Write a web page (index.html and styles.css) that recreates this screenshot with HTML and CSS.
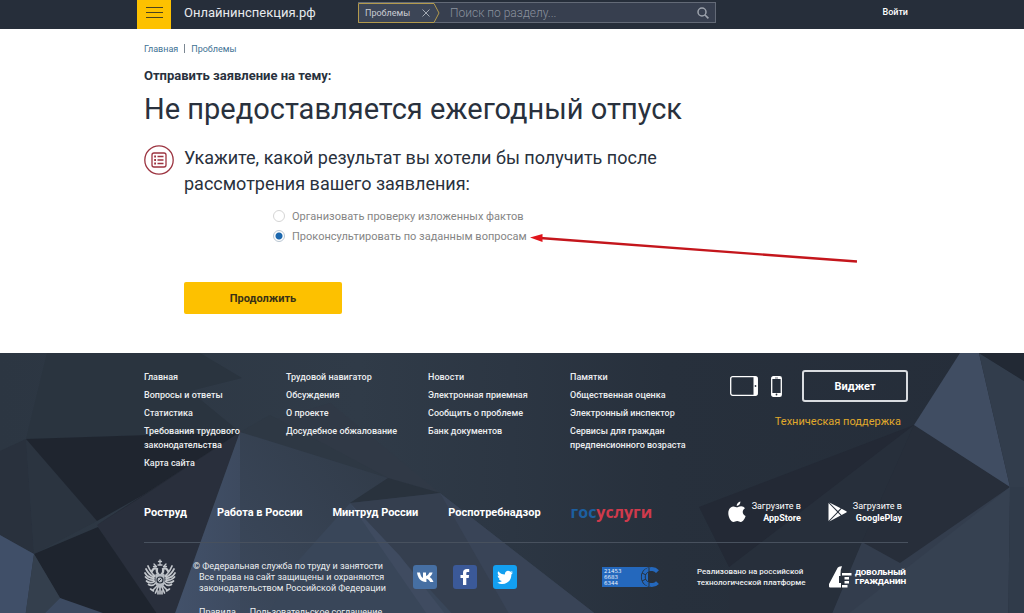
FILE: index.html
```html
<!DOCTYPE html>
<html lang="ru">

<head>
    <meta charset="UTF-8">
    <meta name="viewport" content="width=device-width, initial-scale=1.0">
    <title>Онлайнинспекция.рф</title>
    <link rel="stylesheet" href="styles.css">
</head>

<body>
    <header class="header">
        <div class="container header-row">
            <button type="button" class="menu-btn" aria-label="Меню">
                <span></span>
                <span></span>
                <span></span>
            </button>
            <a href="#" class="site-name">Онлайнинспекция.рф</a>

            <form class="search" onsubmit="return false">
                <div class="tag">
                    <svg class="tag-shape" viewBox="0 0 82 20" aria-hidden="true">
                        <path d="M.5 .5H76L81 10L76 19.5H.5Z" fill="#3c4556" stroke="#b39a4c" />
                    </svg>
                    <span class="tag-text">Проблемы</span>
                    <button type="button" class="tag-close" aria-label="Убрать">
                        <svg viewBox="0 0 8 8" width="8" height="8"><path d="M.5 .5L7.5 7.5M7.5 .5L.5 7.5" stroke="#a3a9b3" fill="none" /></svg>
                    </button>
                </div>
                <input type="text" class="search-input" placeholder="Поиск по разделу..." aria-label="Поиск по разделу">
                <button type="submit" class="search-btn" aria-label="Найти">
                    <svg viewBox="0 0 12 12" width="12" height="12"><circle cx="5" cy="5" r="4" fill="none" stroke="#9da3ad" stroke-width="1.5" /><path d="M8 8L11.4 11.4" stroke="#9da3ad" stroke-width="1.7" /></svg>
                </button>
            </form>

            <a href="#" class="login">Войти</a>
        </div>
    </header>

    <main class="container main">
        <nav class="breadcrumbs">
            <a href="#">Главная</a>
            <a href="#">Проблемы</a>
        </nav>

        <p class="subtitle">Отправить заявление на тему:</p>
        <h1 class="title">Не предоставляется ежегодный отпуск</h1>

        <form class="question" onsubmit="return false">
            <svg class="question-icon" viewBox="0 0 30 30" aria-hidden="true">
                <g fill="none" stroke="#9c3440">
                    <circle cx="15" cy="15" r="14.2" stroke-width="1.3" />
                    <rect x="8" y="8" width="14" height="14" rx="2" stroke-width="1.3" />
                    <path d="M13.5 11.5H19.5M13.5 15H19.5M13.5 18.5H19.5" stroke-width="1.4" />
                    <path d="M10.2 11.5H12M10.2 15H12M10.2 18.5H12" stroke-width="2" />
                </g>
            </svg>
            <div class="question-body">
                <h2 class="question-title">Укажите, какой результат вы хотели бы получить после рассмотрения вашего заявления:</h2>

                <div class="options">
                    <div class="option">
                        <input type="radio" name="result" id="check">
                        <label for="check">Организовать проверку изложенных фактов</label>
                    </div>
                    <div class="option">
                        <input type="radio" name="result" id="consult" checked>
                        <label for="consult">Проконсультировать по заданным вопросам</label>
                        <svg class="arrow" viewBox="0 0 330 32" aria-hidden="true">
                            <path d="M11 5L328 28.5" stroke="#c4161c" stroke-width="2.4" />
                            <path d="M1 4.5L13.5 1V9Z" fill="#e0151c" />
                        </svg>
                    </div>
                </div>

                <button type="submit" class="next-btn">Продолжить</button>
            </div>
        </form>
    </main>

    <footer class="footer">
        <svg class="footer-bg" viewBox="0 0 1024 280" preserveAspectRatio="xMidYMin slice" aria-hidden="true">
            <defs>
                <linearGradient id="base" x1="0" x2="1">
                    <stop offset="0" stop-color="#2c3642" />
                    <stop offset=".35" stop-color="#303b48" />
                    <stop offset=".5" stop-color="#2c3643" />
                    <stop offset=".65" stop-color="#27303c" />
                    <stop offset="1" stop-color="#252d39" />
                </linearGradient>
                <linearGradient id="stripe" x1="0" x2="1">
                    <stop offset="0" stop-color="#43526b" />
                    <stop offset="1" stop-color="#3d4a5f" />
                </linearGradient>
                <linearGradient id="slope" x1="0" x2="1" y1="1" y2="0">
                    <stop offset="0" stop-color="#3c495d" />
                    <stop offset="1" stop-color="#303a47" />
                </linearGradient>
            </defs>
            <rect width="1024" height="280" fill="url(#base)" />
            <path d="M47 0H200L242 25L190 38L240 79L26 86Z" fill="#2a343f" />
            <path d="M240 79L330 95L388 125L350 150L297 215L258 280H240Z" fill="url(#slope)" />
            <path d="M270 68L330 50L440 140L388 125Z" fill="#303946" />
            <path d="M240 79L270 62L388 125Z" fill="#2e3844" />
            <path d="M350 150L388 125L440 140Z" fill="#29323d" />
            <path d="M350 150L440 140L620 280H460Z" fill="#353f4f" />
            <path d="M440 140L620 280H520Z" fill="#394457" />
            <path d="M350 150L297 209L258 280H470Z" fill="#394659" />
            <path d="M350 150L400 203L460 280H440Z" fill="#3f4b60" />
            <path d="M0 98L26 86L34 201L0 182Z" fill="#29313d" />
            <path d="M26 86L97 168L34 201Z" fill="#2b3440" />
            <path d="M26 86L240 79L200 110L97 168Z" fill="#1f252f" />
            <path d="M97 172L240 79L168 280Z" fill="#292f3c" />
            <path d="M97 172L240 79L140 145Z" fill="#232933" />
            <path d="M34 201L98 174L170 280H130L60 245Z" fill="#1e242e" />
            <path d="M240 79V280H168Z" fill="url(#stripe)" />
            <path d="M0 182L34 201L23 280H0Z" fill="#404f68" />
            <path d="M34 201L60 245L40 265L23 280Z" fill="#343f4d" />
            <path d="M60 245L40 265V280H160Z" fill="#3c4a61" />
            <path d="M699 154L914 72L840 210L729 214Z" fill="#232935" />
            <path d="M914 72L862 189L824 280H729V214Z" fill="#272f3b" />
            <path d="M914 72L1010 134L900 220L862 189Z" fill="#272e3a" />
            <path d="M1010 134L900 210L862 189L824 280H1008Z" fill="#333d4d" />
            <path d="M1010 134L824 280H1008Z" fill="#364151" />
            <path d="M1010 134H1024V280H1008Z" fill="#303b4a" />
            <path d="M960 0H979L1010 134L914 72Z" fill="#404d62" />
            <path d="M979 0L1024 28V134H1010Z" fill="#323d4c" />
            <path d="M979 0H1024V28Z" fill="#222934" />
        </svg>

        <div class="container footer-content">
            <div class="footer-top">
                <ul class="links">
                    <li><a href="#">Главная</a></li>
                    <li><a href="#">Вопросы и ответы</a></li>
                    <li><a href="#">Статистика</a></li>
                    <li><a href="#">Требования трудового законодательства</a></li>
                    <li><a href="#">Карта сайта</a></li>
                </ul>
                <ul class="links">
                    <li><a href="#">Трудовой навигатор</a></li>
                    <li><a href="#">Обсуждения</a></li>
                    <li><a href="#">О проекте</a></li>
                    <li><a href="#">Досудебное обжалование</a></li>
                </ul>
                <ul class="links">
                    <li><a href="#">Новости</a></li>
                    <li><a href="#">Электронная приемная</a></li>
                    <li><a href="#">Сообщить о проблеме</a></li>
                    <li><a href="#">Банк документов</a></li>
                </ul>
                <ul class="links">
                    <li><a href="#">Памятки</a></li>
                    <li><a href="#">Общественная оценка</a></li>
                    <li><a href="#">Электронный инспектор</a></li>
                    <li><a href="#">Сервисы для граждан предпенсионного возраста</a></li>
                </ul>
                <div class="widget">
                    <div class="widget-row">
                        <svg class="tablet" viewBox="0 0 28 20" aria-hidden="true">
                            <rect x=".7" y=".7" width="26.6" height="18.6" rx="2" fill="none" stroke="#fff" stroke-width="1.3" />
                            <path d="M23.5 .7H26Q27.3 .7 27.3 2V18Q27.3 19.3 26 19.3H23.5Z" fill="#fff" />
                            <circle cx="25.5" cy="10" r=".9" fill="#29323e" />
                        </svg>
                        <svg class="phone" viewBox="0 0 11 21" aria-hidden="true">
                            <rect x=".7" y=".7" width="9.6" height="19.6" rx="1.6" fill="none" stroke="#fff" stroke-width="1.3" />
                            <path d="M1 1H10V3H1ZM1 17H10V20H1Z" fill="#fff" />
                            <path d="M4 2H7" stroke="#29323e" stroke-width=".7" />
                            <circle cx="5.5" cy="18.5" r=".9" fill="#29323e" />
                        </svg>
                        <button type="button" class="widget-btn">Виджет</button>
                    </div>
                    <a href="#" class="support">Техническая поддержка</a>
                </div>
            </div>

            <div class="partners">
                <a href="#">Роструд</a>
                <a href="#">Работа в России</a>
                <a href="#">Минтруд России</a>
                <a href="#">Роспотребнадзор</a>
                <a href="#" class="gosuslugi"><span>гос</span>услуги</a>
                <div class="stores">
                    <a href="#" class="store">
                        <svg viewBox="0 0 18 22" width="18" height="22" aria-hidden="true">
                            <path d="M12.4 .4C12.6 2.7 10.9 4.9 8.7 5C8.5 2.8 10.4 .7 12.4 .4ZM9 6.3C9.9 6.3 11.2 5.2 13.1 5.2C14.8 5.3 16.2 6 17 7.3C13.6 9.4 14.2 13.7 17.6 15C16.9 17.4 15 20.9 12.9 21C11.4 21.1 10.9 20.1 9.2 20.1C7.5 20.1 6.9 21 5.5 21C3 21 .3 16.3 .3 12.2C.3 7.9 2.8 5.5 5.4 5.4C7 5.4 8.1 6.3 9 6.3Z" fill="#fff" />
                        </svg>
                        <span>Загрузите в<b>AppStore</b></span>
                    </a>
                    <a href="#" class="store">
                        <svg viewBox="0 0 19 20" width="19" height="20" aria-hidden="true">
                            <path d="M.5 1L9.2 9.9L.5 18.9ZM1.3 .4L12.7 6.3L9.9 9.1ZM13.6 6.8L18.3 9.2Q19.2 9.9 18.3 10.6L13.6 13.1L10.6 9.9ZM1.3 19.5L9.9 10.7L12.7 13.5Z" fill="#fff" />
                        </svg>
                        <span>Загрузите в<b>GooglePlay</b></span>
                    </a>
                </div>
            </div>

            <div class="footer-bottom">
                <div class="owner">
                    <svg class="eagle" viewBox="0 0 32 36" aria-hidden="true">
                        <g fill="none" stroke="#c3c7cc" stroke-linecap="round">
                            <path d="M16 1V5M14.5 2.5H17.5M14 6H18" stroke-width="1.3" />
                            <path d="M10 5L12 7M22 5L20 7M9.5 7.5H12.5M19.5 7.5H22.5" stroke-width="1.3" />
                            <path d="M8 12Q10 8 13 10Q12 13 15 16M24 12Q22 8 19 10Q20 13 17 16" stroke-width="2.2" />
                            <path d="M11 17Q7 14 4 7M10 18Q5 16 2 10M10 19.5Q4 19 1 14M10 21Q5 22 1.5 18M10.5 22.5Q6 25 2.5 22M12 24Q8 28 4.5 25.5" stroke-width="1.7" />
                            <path d="M21 17Q25 14 28 7M22 18Q27 16 30 10M22 19.5Q28 19 31 14M22 21Q27 22 30.5 18M21.5 22.5Q26 25 29.5 22M20 24Q24 28 27.5 25.5" stroke-width="1.7" />
                            <path d="M13 27L9 31M19 27L23 31M6.5 30L9.5 32M25.5 30L22.5 32M14 28L11.5 34M18 28L20.5 34M16 28V35M14 32V35M18 32V35" stroke-width="1.6" />
                        </g>
                        <path d="M11.5 15H20.5V24Q20 28 16 29Q12 28 11.5 24Z" fill="#b6bbc2" />
                        <circle cx="16" cy="21" r="3" fill="none" stroke="#28303c" stroke-width="1.2" />
                        <path d="M14.5 22.5L17.5 19.5" stroke="#28303c" />
                    </svg>
                    <p class="copyright">© Федеральная служба по труду и занятости<br>Все права на сайт защищены и охраняются<br>законодательством Российской Федерации</p>
                </div>

                <div class="socials">
                    <a href="#" aria-label="ВКонтакте">
                        <svg viewBox="0 0 24 24"><rect width="24" height="24" rx="3" fill="#466fa3" /><path d="M12.9 17C8 17 5 13.6 4 7.5H7C7.5 10.5 8.6 12.4 10 13V7.5H13V11C14.5 10.5 15.8 9 16.5 7.5H19.6C19 9.5 17.8 11 16.6 12C18 12.7 19.5 14.5 20.5 17H17.2C16.3 15.2 14.8 14 13.4 13.8V17Z" fill="#fff" /></svg>
                    </a>
                    <a href="#" aria-label="Facebook">
                        <svg viewBox="0 0 24 24"><rect width="24" height="24" rx="3" fill="#3b5998" /><path d="M10 20V13H7.5V9.9H10V7.8C10 5.2 11.5 4 13.8 4H16.2V7H14.7C13.6 7 13.3 7.4 13.3 8.3V9.9H16.1L15.7 13H13.3V20Z" fill="#fff" /></svg>
                    </a>
                    <a href="#" aria-label="Twitter">
                        <svg viewBox="0 0 24 24"><rect width="24" height="24" rx="3" fill="#139ff0" /><path d="M20 7.2C19.4 7.5 18.7 7.7 18 7.8C18.8 7.3 19.3 6.7 19.6 5.9C18.9 6.3 18.1 6.6 17.4 6.7C15.3 4.5 11.5 6 11.9 9.6C9.2 9.5 6.8 8.2 5.2 6.2C4.2 8 4.9 9.8 6.2 10.8C5.7 10.8 5.1 10.6 4.7 10.4C4.7 12.1 5.9 13.4 7.4 13.7C6.9 13.8 6.4 13.9 5.9 13.8C6.3 15.1 7.5 16 9 16.1C7.6 17.2 5.9 17.7 4.2 17.5C11 21.6 18.5 17.2 18.4 9.4C19 8.8 19.6 8.1 20 7.2Z" fill="#fff" /></svg>
                    </a>
                </div>

                <svg class="counter" viewBox="0 0 60 22" role="img" aria-label="Счетчик посещений">
                    <rect x="1" y="1" width="46" height="20" fill="#2468bd" />
                    <g fill="#e6eefb" font-family="DejaVu Sans, sans-serif" font-size="5.5">
                        <text x="3" y="7">21453</text>
                        <text x="3" y="13">6683</text>
                        <text x="3" y="19">6344</text>
                    </g>
                    <path d="M47 2A9.5 9.5 0 0 0 47 20M57 5A8.500 8.500 0 0 0 50 1.500" fill="none" stroke="#27303c" stroke-width="1.2" />
                    <path d="M56.5 5.5A8 8 0 1 0 56.5 16.5" fill="none" stroke="#2468bd" stroke-width="4" />
                    <path d="M52 6A5.500 5.500 0 1 0 52 16" fill="none" stroke="#27303c" />
                    <path d="M41 7L45 9M41 15L45 13M48 2V5.500M48 17V20" stroke="#27303c" />
                </svg>

                <p class="platform">Реализовано на российской<br>технологической платформе</p>

                <a href="#" class="citizen">
                    <svg viewBox="0 0 23 22" width="23" height="22" aria-hidden="true">
                        <path d="M0 18L8 3Q9 0 13 .2Q11.5 3 11.5 8V10H10V17H12V21.5H1Q-.5 21 0 18Z" fill="#fff" />
                        <path d="M13 7H22.5V9.5H13ZM15.5 11H20V13.5H15.5ZM15.5 15H20V17.5H15.5ZM13 19H18.5V21.5H13Z" fill="#fff" />
                    </svg>
                    <span>ДОВОЛЬНЫЙ<br>ГРАЖДАНИН</span>
                </a>
            </div>

            <div class="legal">
                <a href="#">Правила</a>
                <a href="#">Пользовательское соглашение</a>
            </div>
        </div>
    </footer>
</body>

</html>
```

FILE: styles.css
```css
* {
    box-sizing: border-box;
}

body {
    margin: 0;
    font-family: Roboto, "Liberation Sans", sans-serif;
    font-size: 11px;
    color: #29313d;
    background-color: #fff;
}

a {
    color: inherit;
    text-decoration: none;
}

p,
h1,
h2,
ul {
    margin: 0;
    padding: 0;
}

button,
input {
    margin: 0;
    padding: 0;
    border: 0;
    font-family: inherit;
}

button {
    cursor: pointer;
}

svg {
    display: block;
}

.container {
    max-width: 792px;
    margin: 0 auto;
    padding-left: 28px;
}

/* header */
.header {
    background-color: #262e3a;
}

.header-row {
    display: flex;
    align-items: flex-start;
    height: 29px;
    padding-left: 21px;
}

.menu-btn {
    display: flex;
    flex-direction: column;
    justify-content: center;
    align-items: center;
    gap: 4px;
    width: 34px;
    height: 29px;
    padding-bottom: 4px;
    background-color: #fdc100;
}

.menu-btn span {
    width: 17px;
    height: 1px;
    background-color: #4b431f;
}

.site-name {
    width: 187px;
    padding-left: 13px;
    color: #e8eaed;
    font-size: 13px;
    line-height: 26px;
}

.search {
    display: flex;
    flex: 0 1 358px;
    height: 21px;
    margin-top: 2px;
    background-color: #373f4f;
    border: 1px solid #636a77;
    border-left: 0;
}

.tag {
    position: relative;
    display: flex;
    align-items: center;
    justify-content: space-between;
    width: 82px;
    height: 20px;
    padding: 0 10px 0 7px;
}

.tag-shape {
    position: absolute;
    left: 0;
    top: 0;
    width: 82px;
    height: 20px;
}

.tag-text,
.tag-close {
    position: relative;
}

.tag-text {
    color: #c9ccd2;
    font-size: 9px;
}

.tag-close,
.search-btn {
    background: none;
}

.search-input {
    flex: 1;
    min-width: 0;
    padding-left: 10px;
    background: none;
    color: #fff;
    font-size: 12px;
    font-weight: 300;
    outline: none;
}

.search-input::placeholder {
    color: #8b929e;
}

.search-btn {
    padding: 0 6px;
}

.login {
    margin-left: auto;
    color: #fff;
    font-size: 9px;
    font-weight: 500;
    line-height: 24px;
}

/* question */
.main {
    padding-top: 14px;
    padding-bottom: 39px;
}

.breadcrumbs {
    display: flex;
    color: #3f7394;
    font-size: 9px;
    line-height: 12px;
}

.breadcrumbs a + a {
    position: relative;
    padding-left: 13px;
}

.breadcrumbs a + a::before {
    content: "";
    position: absolute;
    left: 6px;
    top: 1px;
    width: 1px;
    height: 9px;
    background-color: #7b8792;
}

.subtitle {
    margin-top: 12px;
    font-size: 13px;
    font-weight: 700;
    line-height: 18px;
}

.title {
    margin-top: 4px;
    font-size: 29px;
    font-weight: 400;
    line-height: 40px;
}

.question {
    display: flex;
    gap: 10px;
    margin-top: 16px;
}

.question-icon {
    flex: none;
    width: 30px;
    height: 30px;
}

.question-title {
    max-width: 510px;
    font-size: 18px;
    font-weight: 400;
    line-height: 26px;
}

.options {
    margin-top: 9px;
    padding-left: 89px;
}

.option {
    position: relative;
    display: flex;
    align-items: center;
    gap: 7px;
    height: 20px;
    color: #858585;
}

.option input {
    appearance: none;
    width: 12px;
    height: 12px;
    border: 1px solid #d5d5d5;
    border-radius: 50%;
    background-color: #fff;
}

.option input:checked {
    border-color: #b9c6d2;
    background-image: radial-gradient(circle, #1c68ae 3px, transparent 4px);
}

/* pointer drawn next to the selected option */
.arrow {
    position: absolute;
    left: 256px;
    top: 7px;
    width: 330px;
    height: 32px;
}

.next-btn {
    width: 158px;
    height: 32px;
    margin-top: 36px;
    border-radius: 2px;
    background-color: #fdc100;
    color: #3a3115;
    font-size: 11px;
    font-weight: 700;
}

/* footer */
.footer {
    position: relative;
    overflow: hidden;
    background-color: #29323e;
    color: #eceef0;
}

.footer-bg {
    position: absolute;
    left: 0;
    top: 0;
    width: 100%;
    height: 100%;
}

.footer-content {
    position: relative;
}

.footer-top {
    display: flex;
    height: 150px;
    padding-top: 17px;
}

.links {
    width: 142px;
    padding-right: 20px;
    list-style: none;
    font-size: 9px;
    font-weight: 500;
    line-height: 14px;
}

.links li {
    margin-bottom: 4px;
}

.widget {
    display: flex;
    flex: 1;
    flex-direction: column;
    align-items: flex-end;
}

.widget-row {
    display: flex;
    align-items: center;
}

.tablet {
    width: 28px;
    height: 20px;
    margin-right: 13px;
}

.phone {
    width: 11px;
    height: 21px;
    margin-right: 20px;
}

.widget-btn {
    width: 106px;
    height: 32px;
    border: 2px solid #d9dce0;
    border-radius: 3px;
    background: none;
    color: #fff;
    font-size: 11px;
    font-weight: 700;
}

.support {
    margin-top: 13px;
    padding-right: 7px;
    color: #e0a92b;
    font-size: 11px;
    line-height: 14px;
}

.partners {
    display: flex;
    align-items: center;
    gap: 30px;
    height: 40px;
    padding-bottom: 21px;
    border-bottom: 1px solid #48515e;
    color: #fff;
    font-size: 11px;
    font-weight: 700;
}

.gosuslugi {
    color: #cf3a4c;
    font-family: "Open Sans", sans-serif;
    font-size: 16px;
}

.gosuslugi span {
    color: #1c5fa0;
}

.stores {
    display: flex;
    gap: 27px;
    margin-left: auto;
    padding-right: 6px;
}

.store {
    display: flex;
    align-items: center;
    gap: 6px;
    font-size: 9px;
    font-weight: 400;
    line-height: 12px;
    text-align: right;
}

.store b {
    display: block;
}

.footer-bottom {
    display: grid;
    grid-template-columns: 269px 188px 96px 132px auto;
    align-items: center;
    height: 63px;
    padding-top: 5px;
}

.owner {
    display: flex;
    align-items: center;
    gap: 23px;
}

.eagle {
    width: 32px;
    height: 36px;
}

.copyright {
    font-size: 9px;
    line-height: 11px;
    text-indent: -6px;
}

.socials {
    display: flex;
    gap: 16px;
}

.socials svg {
    width: 24px;
    height: 24px;
}

.counter {
    width: 60px;
    height: 22px;
}

.platform {
    font-size: 8px;
    font-weight: 500;
    line-height: 11px;
}

.citizen {
    display: flex;
    align-items: center;
    gap: 3px;
    color: #fff;
    font-size: 8px;
    font-weight: 900;
    line-height: 9px;
}

.legal {
    display: flex;
    gap: 14px;
    padding-left: 55px;
    padding-bottom: 14px;
    font-size: 9px;
    line-height: 12px;
}
```
